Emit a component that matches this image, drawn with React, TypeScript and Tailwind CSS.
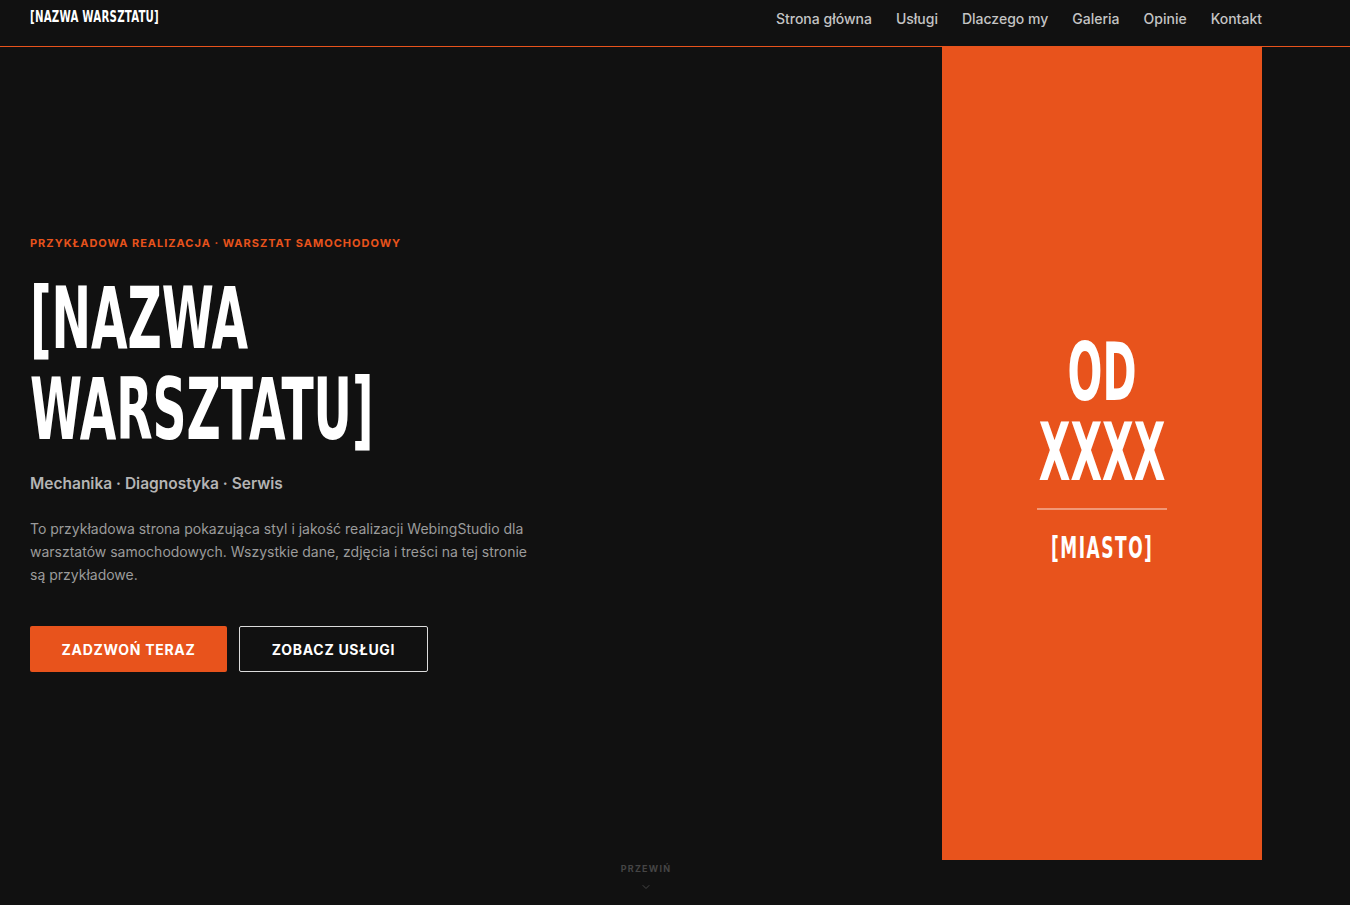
import React from 'react';
import { ChevronDown } from 'lucide-react';

const navLinks = ['Strona główna', 'Usługi', 'Dlaczego my', 'Galeria', 'Opinie', 'Kontakt'];

// condensed display face used for the brand, hero title and price panel
const display = "font-['DejaVu_Sans_Condensed','DejaVu_Sans',sans-serif] font-bold uppercase";

export default function App() {
  return (
    <div className="min-h-screen bg-[#111111] text-white font-['Inter','Noto_Sans',sans-serif]">
      {/* Top bar */}
      <header className="h-[47px] border-b border-[#e8531c] pl-[30px] pr-[88px] flex items-start justify-between">
        <a className={`${display} text-[16px] leading-none mt-[9px] tracking-[0.02em] origin-left scale-x-[0.71] inline-block whitespace-nowrap`}>
          [Nazwa Warsztatu]
        </a>
        <nav className="flex items-center gap-6 h-[37px]">
          {navLinks.map(link => (
            <a key={link} className="text-[14px] font-medium text-[#c4c4c4]">
              {link}
            </a>
          ))}
        </nav>
      </header>

      {/* Hero */}
      <section className="h-[858px] pl-[30px] pr-[88px] flex items-start justify-between relative">
        <div className="pt-[188px]">
          <p className="text-[11px] leading-4 font-bold tracking-[0.09em] text-[#e8531c] uppercase">
            Przykładowa realizacja · Warsztat samochodowy
          </p>
          <h1 className={`${display} text-[86px] leading-[91px] mt-[22px] origin-left scale-x-[0.61] whitespace-nowrap`}>
            [Nazwa
            <br />
            Warsztatu]
          </h1>
          <p className="mt-[17px] text-[15.5px] leading-6 font-semibold text-[#b4b4b4]">
            Mechanika · Diagnostyka · Serwis
          </p>
          <p className="mt-[21px] w-[505px] text-[14px] leading-[23px] text-[#9b9b9b]">
            To przykładowa strona pokazująca styl i jakość realizacji WebingStudio dla warsztatów samochodowych. Wszystkie dane, zdjęcia i treści na tej stronie są przykładowe.
          </p>
          <div className="mt-[40px] flex gap-3">
            <button className="h-[46px] w-[197px] rounded-[2px] bg-[#e8531c] text-[14px] font-bold tracking-[0.05em] uppercase">
              Zadzwoń teraz
            </button>
            <button className="h-[46px] w-[189px] rounded-[2px] border border-[#dcdcdc] text-[14px] font-bold tracking-[0.05em] uppercase">
              Zobacz usługi
            </button>
          </div>
        </div>

        {/* Price panel */}
        <div className="w-[320px] h-[813px] bg-[#e8531c] flex flex-col items-center pt-[286px]">
          <div className={`${display} text-[80px] leading-[80px] text-center scale-x-[0.57]`}>
            <div>Od</div>
            <div>XXXX</div>
          </div>
          <div className="w-[130px] h-[2px] bg-white/40 mt-[15px]" />
          <div className={`${display} text-[30px] leading-none mt-[23px] tracking-[0.08em] scale-x-[0.63]`}>
            [Miasto]
          </div>
        </div>

        {/* Scroll hint */}
        <div className="absolute left-[30px] right-[88px] top-[816px] flex flex-col items-center text-[#454545]">
          <span className="text-[9px] leading-3 font-bold tracking-[0.14em] uppercase">Przewiń</span>
          <ChevronDown size={12} strokeWidth={2} className="mt-[6px]" />
        </div>
      </section>
    </div>
  );
}
